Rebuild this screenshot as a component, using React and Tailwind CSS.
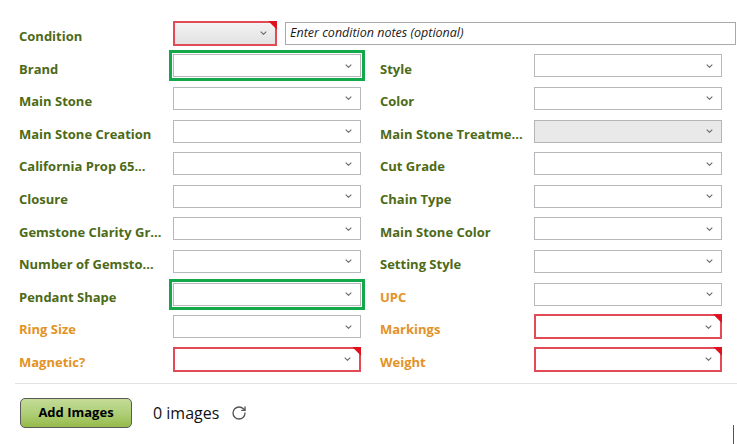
import { RotateCw } from "lucide-react";

const rows = [
  { left: ["Brand", "green"], right: ["Style", ""] },
  { left: ["Main Stone", ""], right: ["Color", ""] },
  { left: ["Main Stone Creation", ""], right: ["Main Stone Treatme...", "disabled"] },
  { left: ["California Prop 65...", ""], right: ["Cut Grade", ""] },
  { left: ["Closure", ""], right: ["Chain Type", ""] },
  { left: ["Gemstone Clarity Gr...", ""], right: ["Main Stone Color", ""] },
  { left: ["Number of Gemsto...", ""], right: ["Setting Style", ""] },
  { left: ["Pendant Shape", "green"], right: ["UPC", "", true] },
  { left: ["Ring Size", "", true], right: ["Markings", "red", true] },
  { left: ["Magnetic?", "red", true], right: ["Weight", "red", true] },
];

const Chevron = () => (
  <svg width="7" height="4" viewBox="0 0 7 4" className="absolute right-[8px] top-1/2 -translate-y-1/2">
    <path d="M0.7 0.7l2.8 2.6 2.8-2.6" fill="none" stroke="#666" strokeWidth="1.1" />
  </svg>
);

const Corner = () => (
  <span className="absolute -right-[2px] -top-[2px] w-[9px] h-[9px] bg-[#e0101e] [clip-path:polygon(0_0,100%_0,100%_100%)]" />
);

const Select = ({ kind, width = "w-[188px]" }) => {
  if (kind === "red") {
    return (
      <div className={`relative ${width} h-[25px] border-2 border-[#e24a55] bg-white`}>
        <Chevron />
        <Corner />
      </div>
    );
  }
  if (kind === "disabled") {
    return (
      <div className={`relative ${width} h-[23px] border border-[#b5b5b5] bg-[#e9e9e9]`}>
        <Chevron />
      </div>
    );
  }
  return (
    <div
      className={`relative ${width} h-[23px] border border-[#b8b8bc] bg-white ${
        kind === "green" ? "outline-[3px] outline-solid outline-[#13a84a] outline-offset-[1px]" : ""
      }`}
    >
      <Chevron />
    </div>
  );
};

const Label = ({ text, orange }) => (
  <div
    className={`w-[154px] shrink-0 mt-[7px] text-[13px] font-bold whitespace-nowrap ${
      orange ? "text-[#e39226]" : "text-[#4d6a17]"
    }`}
  >
    {text}
  </div>
);

export default function App() {
  return (
    <div className="w-[737px] h-[444px] bg-white overflow-hidden relative font-['Open_Sans',sans-serif]">
      <div className="pt-[17px] pl-[19px]">
        <div className="flex items-center h-[32.6px]">
          <Label text="Condition" />
          <div className="relative w-[104px] h-[25px] border-2 border-[#e24a55] bg-gradient-to-b from-[#f3f3f3] to-[#e2e2e2]">
            <Chevron />
            <Corner />
          </div>
          <div className="ml-[8px] w-[451px] h-[23px] border border-[#a9a9a9] flex items-center px-[4px] text-[12.5px] italic text-[#1a1a1a]">
            Enter condition notes (optional)
          </div>
        </div>
        {rows.map((r, i) => (
          <div key={i} className="flex items-center h-[32.6px]">
            <Label text={r.left[0]} orange={r.left[2]} />
            <Select kind={r.left[1]} />
            <div className="w-[19px]" />
            <Label text={r.right[0]} orange={r.right[2]} />
            <Select kind={r.right[1]} />
          </div>
        ))}
      </div>
      <div className="ml-[15px] mt-[7px] border-t border-[#e2e2e2]" />
      <div className="flex items-center pl-[20px] mt-[14px]">
        <button className="w-[112px] h-[30px] rounded-[5px] border border-[#5a5a5a] bg-gradient-to-b from-[#c3dc98] via-[#b0cf78] to-[#96ba4a] text-[13px] font-bold text-black">
          Add Images
        </button>
        <span className="ml-[21px] text-[16px] text-[#111]">0 images</span>
        <RotateCw className="ml-[12px] w-[16px] h-[16px] text-[#555]" strokeWidth={2} />
      </div>
      <div className="absolute right-[3px] bottom-0 w-px h-[19px] bg-[#555]" />
    </div>
  );
}
